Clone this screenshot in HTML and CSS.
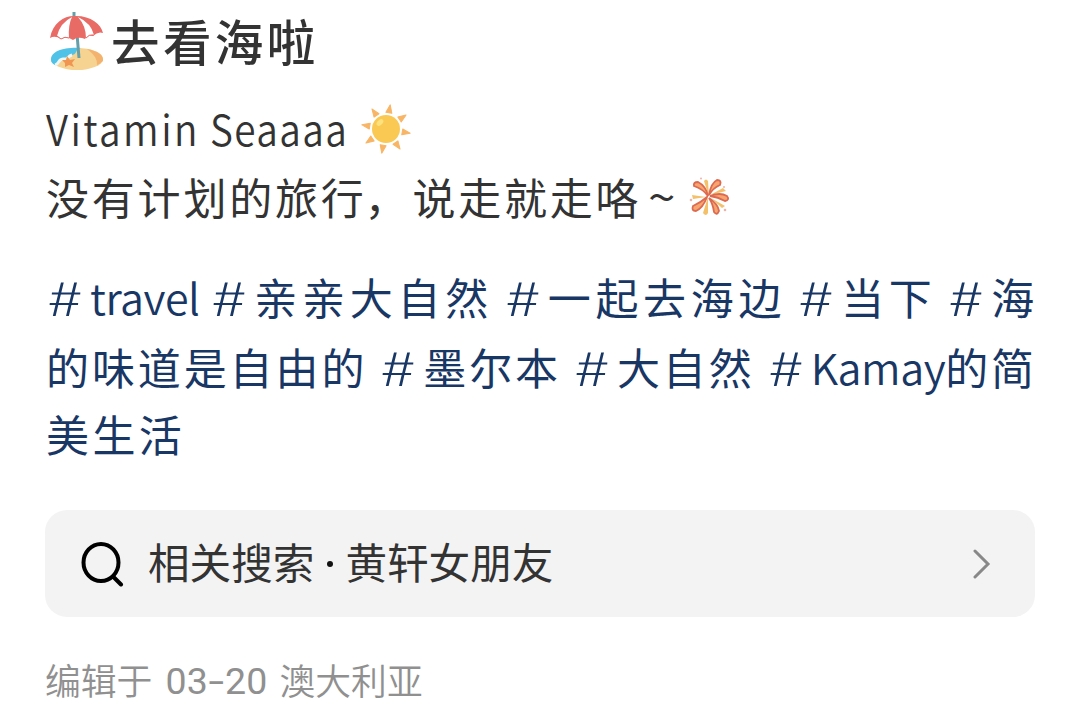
FILE: index.html
```
<!DOCTYPE html>
<html lang="zh-CN">
<head>
    <meta charset="UTF-8">
    <meta name="viewport" content="width=device-width, initial-scale=1.0">
    <title>去看海啦</title>
    <link rel="stylesheet" href="styles.css">
</head>
<body>
    <main class="note">
        <h1 class="title">
            <svg class="icon-beach" viewBox="0 0 56 60">
                <ellipse cx="28" cy="48" rx="26" ry="11" fill="#f6d390"/>
                <path d="M2 49C2 40 15 36 32 37C25 39 29 43 23 44C18 45 20 49 14 48C8 49 11 53 6 54Q2 52 2 49Z" fill="#50c2e8"/>
                <path d="M6 54C11 53 8 49 14 48C20 49 18 45 23 44" fill="none" stroke="#eef7f5" stroke-width="3"/>
                <path d="M38 38Q55 41 54 50Q51 53 48 54Q49 46 38 38Z" fill="#f3b36f"/>
                <path d="M27 11L30 47" stroke="#669faa" stroke-width="3"/>
                <path d="M25 1V9" stroke="#669faa" stroke-width="3"/>
                <path d="M1 27C4 11 16 4 27 5C42 5 52 13 54 22Q49 20 44 25Q39 23 36 28Q29 25 24 29Q18 25 12 28Q6 24 1 27Z" fill="#e96b66"/>
                <path d="M23 6Q11 12 8 25L12 28Q16 25 20 27Q19 14 23 6Z" fill="#fff"/>
                <path d="M29 6Q37 15 37 27Q40 23 45 24Q42 12 29 6Z" fill="#fff"/>
                <path d="M8 25L12 28Q16 25 20 27M37 27Q40 23 45 24" fill="none" stroke="#e96b66"/>
                <path d="M18 45L21 49L26 48L23 52L25 56L20 54L16 56L16 52L13 49H17Z" fill="#f19552"/>
            </svg>
            <span>去看海啦</span>
        </h1>

        <div class="content">
            <p class="line english"><span><b>Vitamin</b> Seaaaa</span>
                <svg class="icon-sun" viewBox="0 0 52 52">
                    <g fill="#f8b565" stroke="#f8b565" stroke-linejoin="round" transform="rotate(10 26 26)">
                        <path id="ray" d="M26 1.5L29 9.5H23Z"/>
                        <use href="#ray" transform="rotate(45 26 26)"/>
                        <use href="#ray" transform="rotate(90 26 26)"/>
                        <use href="#ray" transform="rotate(135 26 26)"/>
                        <use href="#ray" transform="rotate(180 26 26)"/>
                        <use href="#ray" transform="rotate(225 26 26)"/>
                        <use href="#ray" transform="rotate(270 26 26)"/>
                        <use href="#ray" transform="rotate(315 26 26)"/>
                    </g>
                    <circle cx="26" cy="26" r="14" fill="#fac954"/>
                    <ellipse cx="20" cy="19.500" rx="4" ry="2.500" fill="#fce27c" transform="rotate(-45 20 19.500)"/>
                </svg>
            </p>
            <p class="line chinese"><span>没有计划的旅行<span class="comma">，</span>说走就走咯</span><span class="wave">~</span>
                <svg class="icon-firework" viewBox="0 0 42 40">
                    <g fill="#f4c06a">
                        <path d="M20 20L15 4Q17 1 19 4ZM19 20L14 36Q17 40 19 36ZM21 18L34 11L37 14ZM17 20L3 18L4 22ZM22 21L36 29L33 31Z"/>
                    </g>
                    <g fill="#f7a56e" stroke="#dc6a50" stroke-width="1.800">
                        <path d="M19 19Q17 9 9 5Q4 5 5 9Q14 12 19 19Z"/>
                        <path d="M20 18Q22 6 28 3Q33 3 31 8Q24 11 20 18Z"/>
                        <path d="M21 19Q31 15 38 19Q41 23 36 24Q29 20 21 19Z"/>
                        <path d="M20 21Q29 27 30 34Q28 39 25 35Q24 27 20 21Z"/>
                        <path d="M18 20Q14 31 7 34Q2 34 4 29Q11 26 18 20Z"/>
                    </g>
                    <g fill="#efb1aa"><circle cx="12" cy="1.500" r="1"/><circle cx="2" cy="23" r="1.300"/><circle cx="36" cy="33" r="1.300"/><circle cx="35" cy="10" r="1"/></g>
                </svg>
            </p>
        </div>

        <div class="tags">
            <p class="tag-row row-one"><span><i>#</i><b>travel</b></span><span><i>#</i>亲亲大自然</span><span><i>#</i>一起去海边</span><span><i>#</i>当下</span><span><i>#</i>海</span></p>
            <p class="tag-row row-two"><span>的味道是自由的</span><span><i>#</i>墨尔本</span><span><i>#</i>大自然</span><span><i>#</i><b>Kamay</b>的简</span></p>
            <p class="tag-row row-three"><span>美生活</span></p>
        </div>

        <div class="search">
            <svg class="icon-search" viewBox="0 0 44 46">
                <ellipse cx="20" cy="21.500" rx="17.500" ry="18.500"/>
                <path d="M32.500 36L40 43.500"/>
            </svg>
            <span class="search-text">相关搜索</span><span class="dot"></span><span class="search-text">黄轩女朋友</span>
            <svg class="icon-arrow" viewBox="0 0 18 30"><path d="M2 2L15 15L2 28"/></svg>
        </div>

        <footer><span>编辑于</span><span class="date">03<em>-</em>20</span><span>澳大利亚</span></footer>
    </main>
</body>
</html>
```
FILE: styles.css
```
* {
    box-sizing: border-box;
}

body {
    margin: 0;
    background: #fff;
    color: #333;
    font-family: "Noto Sans CJK SC", sans-serif;
}

.note {
    height: 714px;
    padding: 6px 45px 0;
    overflow: hidden;
}

h1, p {
    margin: 0;
    font-weight: 400;
}

svg {
    flex: none;
}

.title {
    display: flex;
    align-items: center;
    height: 68px;
    font-size: 48.5px;
    font-weight: 500;
    letter-spacing: 3.4px;
    white-space: nowrap;
}

.icon-beach {
    width: 56px;
    height: 60px;
    margin: 2px 6px 0 4px;
}

.content {
    padding-top: 20px;
}

.line {
    display: flex;
    align-items: center;
    height: 68px;
    font-size: 43px;
    letter-spacing: 2.8px;
    white-space: nowrap;
}

.chinese {
    padding-left: 1px;
}

.comma {
    display: inline-block;
    transform: translateX(-2px);
}

.english {
    padding-left: 1px;
    font-weight: 350;
    letter-spacing: 1.6px;
}

.english span {
    transform: translateY(-1px) scaleX(0.9);
    transform-origin: left;
}

.english b {
    font-weight: 350;
    letter-spacing: 2.7px;
}

.icon-sun {
    width: 52px;
    height: 52px;
    margin: 1px 0 0 -22px;
}

.wave {
    margin: -4px 0 0 9px;
    transform: scaleX(1.15);
}

.icon-firework {
    width: 42px;
    height: 40px;
    margin: 2px 0 0 12px;
}

.tags {
    padding-top: 31px;
    color: #193765;
}

.tag-row {
    display: flex;
    align-items: center;
    justify-content: space-between;
    height: 70px;
    padding-left: 1px;
    margin-right: -2px;
    font-size: 43px;
    white-space: nowrap;
}

.tag-row i {
    display: inline-block;
    width: 44px;
    font-style: normal;
    font-weight: 300;
    letter-spacing: 0;
    text-align: center;
    transform: translate(-3px, -1px) scale(1.5, 1.08) skewX(-3deg);
}

.tag-row b {
    font-weight: 350;
    letter-spacing: -0.5px;
}

.row-one {
    margin-right: -4px;
    letter-spacing: 4.7px;
}

.row-two {
    letter-spacing: 2.9px;
}

.row-three {
    height: 64px;
    letter-spacing: 3.4px;
}

.search {
    display: flex;
    align-items: center;
    height: 107px;
    margin-top: 45px;
    padding: 0 44px 0 36px;
    border-radius: 22px;
    background: #f3f3f3;
}

.icon-search {
    width: 44px;
    height: 46px;
    margin-right: 23px;
    fill: none;
    stroke: #000;
    stroke-width: 4;
    stroke-linecap: round;
}

.search-text {
    margin-top: -5px;
    font-size: 41.6px;
}

.dot {
    width: 6px;
    height: 6px;
    margin: 0 12px 0 13px;
    border-radius: 50%;
    background: #111;
}

.icon-arrow {
    width: 18px;
    height: 30px;
    margin-left: auto;
    fill: none;
    stroke: #888;
    stroke-width: 3;
    stroke-linecap: round;
}

footer {
    display: flex;
    align-items: center;
    height: 60px;
    margin-top: 32px;
    color: #909090;
    font-size: 35.8px;
    font-weight: 350;
    white-space: nowrap;
}

.date {
    margin: 4px 12px 0 13px;
    font-family: Roboto, sans-serif;
    font-size: 37.5px;
    font-weight: 400;
    letter-spacing: 0.2px;
}

.date em {
    display: inline-block;
    width: 17px;
    font-style: normal;
    text-align: center;
    transform: scaleX(1.5);
}
```
